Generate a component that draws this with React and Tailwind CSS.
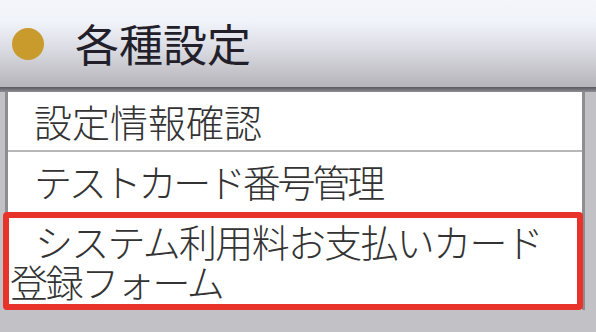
import React from "react";

export default function App() {
  return (
    <div
      className="relative w-[596px] h-[332px] overflow-hidden bg-[#c4c4c8] flex flex-col"
      style={{ fontFamily: '"Noto Sans CJK JP", "Noto Sans", sans-serif' }}
    >
      <header className="h-[87px] shrink-0 bg-[linear-gradient(to_bottom,#f4f5f9_0%,#f1f3fa_25%,#dcdde4_55%,#c6c6cc_80%,#b4b4ba_100%)] flex items-center pl-[12px]">
        <span className="w-[32px] h-[32px] rounded-full bg-[#c99a2c] shrink-0" />
        <span className="ml-[31px] text-[44px] leading-none font-normal text-[#231f2a] -mt-[2px]">各種設定</span>
      </header>
      <div className="h-[5px] shrink-0 bg-[linear-gradient(to_bottom,#58585e,#8e8e94)]" />
      <div className="flex flex-1 pl-[5px] pr-[11px] bg-[#c2c2c6]">
        <div className="flex-1 h-[218px] bg-white border-l-[3px] border-r-[3px] border-[#8e8e92] flex flex-col text-[38px] leading-[40px] font-light text-[#333]">
          <div className="h-[60px] shrink-0 flex items-center pl-[26px] border-b-2 border-[#b8b8b8]">設定情報確認</div>
          <div className="h-[58px] shrink-0 flex items-center pl-[26px] tracking-[-3.2px]">テストカード番号管理</div>
          <div className="flex-1 pt-[11px] pl-[2px]">
            <div className="pl-[25px] whitespace-nowrap tracking-[-1.7px]">システム利用料お支払いカード</div>
            <div className="whitespace-nowrap tracking-[-2.4px]">登録フォーム</div>
          </div>
        </div>
      </div>
      <div className="absolute left-[3px] top-[212px] w-[580px] h-[98px] border-[6px] border-[#e8332a] rounded-[4px]" />
    </div>
  );
}
